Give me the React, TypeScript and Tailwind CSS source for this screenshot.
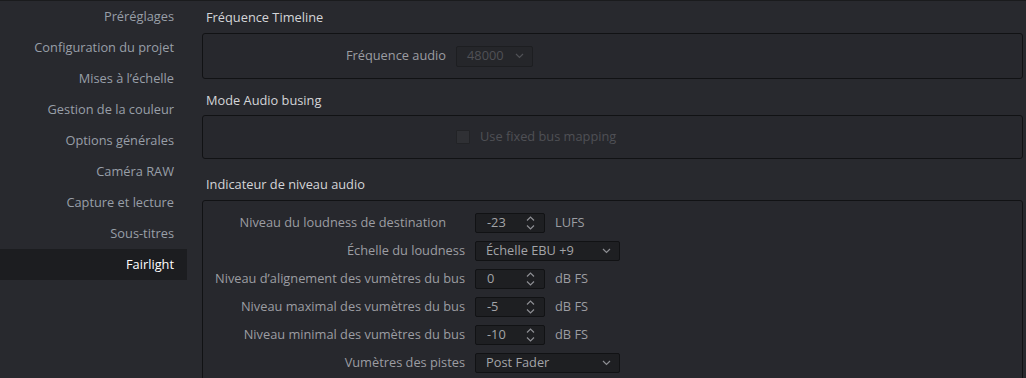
import React from 'react';

const font = { fontFamily: '"Open Sans", "Noto Sans", sans-serif' };

const navItems = [
  'Préréglages',
  'Configuration du projet',
  'Mises à l’échelle',
  'Gestion de la couleur',
  'Options générales',
  'Caméra RAW',
  'Capture et lecture',
  'Sous-titres',
  'Fairlight',
];

const Chevron = ({ className = '' }: { className?: string }) => (
  <svg width="9" height="6" viewBox="0 0 9 6" className={className}>
    <path d="M1 1 L4.5 4.5 L8 1" fill="none" stroke="currentColor" strokeWidth="1.2" />
  </svg>
);

const SpinArrows = () => (
  <svg width="9" height="16" viewBox="0 0 9 16" className="text-[#8d8e93]">
    <path d="M1 5.5 L4.5 2 L8 5.5" fill="none" stroke="currentColor" strokeWidth="1.2" />
    <path d="M1 10.5 L4.5 14 L8 10.5" fill="none" stroke="currentColor" strokeWidth="1.2" />
  </svg>
);

const SpinBox = ({ value }: { value: string }) => (
  <div className="flex h-[20px] w-[70px] items-center justify-between rounded-[2px] border border-[#111214] bg-[#1e1f22] pl-[11px] pr-[9px] text-[12.8px] text-[#a3a4a8]">
    <span>{value}</span>
    <SpinArrows />
  </div>
);

const Select = ({ value }: { value: string }) => (
  <div className="flex h-[20px] w-[145px] items-center justify-between rounded-[2px] border border-[#111214] bg-[#1e1f22] pl-[10px] pr-[8px] text-[12.8px] text-[#a3a4a8]">
    <span>{value}</span>
    <Chevron className="text-[#8d8e93]" />
  </div>
);

const Row = ({ label, children, unit, labelPad = '' }: { label: string; children: React.ReactNode; unit?: string; labelPad?: string }) => (
  <div className="flex h-[20px] items-center">
    <div className={`w-[262px] text-right text-[12.8px] text-[#9c9da2] ${labelPad}`}>{label}</div>
    <div className="ml-[10px]">{children}</div>
    {unit && <div className="ml-[10px] text-[12.8px] text-[#9c9da2]">{unit}</div>}
  </div>
);

export default function App() {
  return (
    <div style={font} className="flex h-[378px] w-[1026px] overflow-hidden border-t border-[#1a1b1d] bg-[#28292e]">
      <aside className="w-[187px] shrink-0">
        {navItems.map((item) => (
          <div
            key={item}
            className={`flex h-[31px] items-center justify-end pr-[13px] text-[12.8px] ${
              item === 'Fairlight' ? 'bg-[#1c1d20] text-white' : 'text-[#989fa8]'
            }`}
          >
            {item}
          </div>
        ))}
      </aside>

      <main className="flex-1 pl-[15px] pr-[3px]">
        <h2 className="pl-[4px] pt-[7px] pb-[7px] text-[12.8px] leading-[18px] text-[#d4d5d8]">Fréquence Timeline</h2>
        <div className="flex h-[46px] items-center rounded-[3px] border border-[#111214] bg-[#27282d]">
          <div className="w-[243px] text-right text-[12.8px] text-[#9c9da2]">Fréquence audio</div>
          <div className="ml-[10px] flex h-[21px] w-[77px] items-center justify-between rounded-[2px] border border-[#1d1e21] bg-[#25262a] pl-[10px] pr-[8px] text-[12.8px] text-[#505156]">
            <span>48000</span>
            <Chevron className="text-[#505156]" />
          </div>
        </div>

        <h2 className="pl-[4px] pt-[12px] pb-[6px] text-[12.8px] leading-[18px] text-[#d4d5d8]">Mode Audio busing</h2>
        <div className="flex h-[44px] items-center rounded-[3px] border border-[#111214] bg-[#27282d]">
          <div className="ml-[253px] h-[14px] w-[14px] rounded-[1px] border border-[#222326] bg-[#2f3034]" />
          <span className="ml-[10px] text-[12.8px] text-[#4f5055]">Use fixed bus mapping</span>
        </div>

        <h2 className="pl-[4px] pt-[16px] pb-[7px] text-[12.8px] leading-[18px] text-[#d4d5d8]">Indicateur de niveau audio</h2>
        <div className="flex h-[200px] flex-col gap-[8px] rounded-[3px] border border-[#111214] bg-[#27282d] pt-[12px]">
          <Row label="Niveau du loudness de destination" unit="LUFS" labelPad="pr-[19px]">
            <SpinBox value="-23" />
          </Row>
          <Row label="Échelle du loudness">
            <Select value="Échelle EBU +9" />
          </Row>
          <Row label="Niveau d’alignement des vumètres du bus" unit="dB FS">
            <SpinBox value="0" />
          </Row>
          <Row label="Niveau maximal des vumètres du bus" unit="dB FS">
            <SpinBox value="-5" />
          </Row>
          <Row label="Niveau minimal des vumètres du bus" unit="dB FS">
            <SpinBox value="-10" />
          </Row>
          <Row label="Vumètres des pistes">
            <Select value="Post Fader" />
          </Row>
        </div>
      </main>
    </div>
  );
}
